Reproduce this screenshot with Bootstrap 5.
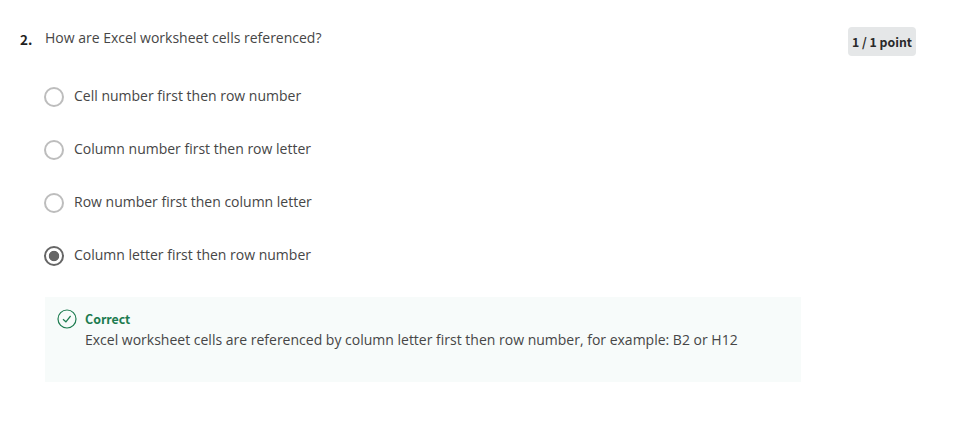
<!DOCTYPE html>
<html lang="en">
<head>
<meta charset="utf-8">
<meta name="viewport" content="width=device-width, initial-scale=1">
<title>Quiz question</title>
<link href="https://cdn.jsdelivr.net/npm/bootstrap@5.3.0/dist/css/bootstrap.min.css" rel="stylesheet">
<style>
body { font-family: "Open Sans", "Noto Sans", sans-serif; font-size: 14px; line-height: 21px; color: #464646; }
.question { padding: 27px 44px 0 20px; }
.number, .points, .verdict { font-family: "Noto Sans CJK SC", "Open Sans", sans-serif; font-weight: 700; }
.number { width: 25px; font-size: 13.5px; color: #1f1f1f; padding-top: 2px; }
.points { height: 29px; width: 68px; padding-top: 1px; border-radius: 4px; background: #e5e7e8; color: #2a2a2a; font-size: 12.3px; }
.answers { margin: 12px 0 0 24px; }
.answer { height: 53px; gap: 10px; padding-top: 17px; }
.answer .form-check-input { width: 20px; height: 20px; border: 2px solid #bdbdbd; margin: 2px 0 0; }
.answer .form-check-input:checked { border-color: #666; background: radial-gradient(circle, #666 4.8px, transparent 5.6px); }
.feedback { width: 756px; height: 85px; margin: 17px 0 0 25px; padding: 12px; gap: 8px; background: #f7fbfa; }
.verdict { color: #1d7c50; font-size: 12.4px; margin-bottom: -1px; }
</style>
</head>
<body>
<main class="question">
  <div class="d-flex align-items-start">
    <div class="number flex-shrink-0">2.</div>
    <div class="flex-grow-1"><span>How are Excel worksheet cells referenced?</span></div>
    <div class="points d-flex align-items-center justify-content-center text-nowrap">1 / 1 point</div>
  </div>
  <div class="answers">
    <label class="answer d-flex align-items-start"><input class="form-check-input flex-shrink-0" type="radio" name="cells"><span>Cell number first then row number</span></label>
    <label class="answer d-flex align-items-start"><input class="form-check-input flex-shrink-0" type="radio" name="cells"><span>Column number first then row letter</span></label>
    <label class="answer d-flex align-items-start"><input class="form-check-input flex-shrink-0" type="radio" name="cells"><span>Row number first then column letter</span></label>
    <label class="answer d-flex align-items-start"><input class="form-check-input flex-shrink-0" type="radio" name="cells" checked><span>Column letter first then row number</span></label>
  </div>
  <div class="feedback d-flex align-items-start">
    <svg class="flex-shrink-0" width="20" height="20" viewBox="0 0 20 20" fill="none" stroke="#1d7c50" stroke-width="1.2"><circle cx="10" cy="10" r="9"/><path d="M6 10.2 8.9 12.8 13.6 7"/></svg>
    <div>
      <div class="verdict">Correct</div>
      <div class="text-nowrap">Excel worksheet cells are referenced by column letter first then row number, for example: B2 or H12</div>
    </div>
  </div>
</main>
<script src="https://cdn.jsdelivr.net/npm/bootstrap@5.3.0/dist/js/bootstrap.bundle.min.js"></script>
</body>
</html>
